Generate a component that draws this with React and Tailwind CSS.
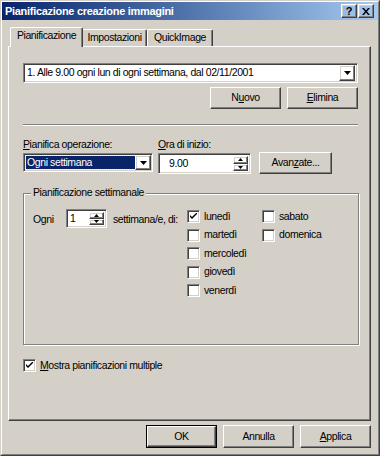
import React from "react";

const raised =
  "border border-t-white border-l-white border-r-[#404040] border-b-[#404040] shadow-[inset_-1px_-1px_0_#808080,inset_1px_1px_0_#d4d0c8]";
const sunken =
  "border border-t-[#808080] border-l-[#808080] border-r-white border-b-white shadow-[inset_1px_1px_0_#404040,inset_-1px_-1px_0_#d4d0c8]";

function Button({ className = "", children, isDefault }) {
  if (isDefault) {
    return (
      <div className={`border border-black ${className}`}>
        <div className={`${raised} w-full h-full flex items-center justify-center`}>
          {children}
        </div>
      </div>
    );
  }
  return (
    <div className={`${raised} flex items-center justify-center ${className}`}>
      {children}
    </div>
  );
}

function DownArrow() {
  return (
    <svg width="7" height="4" viewBox="0 0 7 4">
      <path d="M0 0h7L3.5 4z" fill="#000" />
    </svg>
  );
}

function SpinButtons() {
  return (
    <div className="flex flex-col w-[15px] h-full">
      <div className={`${raised} flex-1 flex items-center justify-center`}>
        <svg width="5" height="3" viewBox="0 0 5 3">
          <path d="M2.5 0L5 3H0z" fill="#000" />
        </svg>
      </div>
      <div className={`${raised} flex-1 flex items-center justify-center`}>
        <svg width="5" height="3" viewBox="0 0 5 3">
          <path d="M0 0h5L2.5 3z" fill="#000" />
        </svg>
      </div>
    </div>
  );
}

function Checkbox({ checked }) {
  return (
    <div className={`${sunken} w-[13px] h-[13px] bg-white flex items-center justify-center shrink-0`}>
      {checked && (
        <svg width="7" height="7" viewBox="0 0 7 7">
          <path d="M0 2l2 2 5-5v2L2 6 0 4z" fill="#000" />
        </svg>
      )}
    </div>
  );
}

function Day({ checked, label }) {
  return (
    <div className="flex items-center gap-[4px] h-[13px]">
      <Checkbox checked={checked} />
      <span>{label}</span>
    </div>
  );
}

export default function App() {
  return (
    <div className="w-[380px] h-[456px] bg-[#d4d0c8] text-[10.5px] tracking-[-0.4px] text-black font-['Liberation_Sans',Arial,sans-serif] border border-t-[#d4d0c8] border-l-[#d4d0c8] border-r-[#404040] border-b-[#404040]">
      <div className="w-full h-full border border-t-white border-l-white border-r-[#808080] border-b-[#808080] flex flex-col">
        {/* title bar */}
        <div className="h-[18px] bg-gradient-to-r from-[#0a246a] to-[#a6caf0] flex items-center pl-[3px] pr-[4px]">
          <span className="text-white font-bold flex-1 text-[11px] tracking-[-0.3px]">
            Pianificazione creazione immagini
          </span>
          <div className="flex gap-[1px]">
            <div className={`${raised} w-[16px] h-[14px] flex items-center justify-center font-bold text-[11px] leading-none tracking-normal`}>
              ?
            </div>
            <div className={`${raised} w-[16px] h-[14px] flex items-center justify-center`}>
              <svg width="8" height="7" viewBox="0 0 8 7">
                <path d="M0 0h2l2 2.5L6 0h2L5 3.5 8 7H6L4 4.5 2 7H0l3-3.5z" fill="#000" />
              </svg>
            </div>
          </div>
        </div>

        {/* tabs */}
        <div className="flex items-end pl-[8px] h-[20px] mt-[6px]">
          <div className="relative z-10 h-[20px] w-[73px] -mb-px bg-[#d4d0c8] border-t border-l border-t-white border-l-white border-r border-r-[#404040] shadow-[inset_-1px_0_0_#808080] rounded-t-[2px] flex items-center justify-center pb-[3px]">
            Pianificazione
          </div>
          <div className="h-[17px] w-[64px] border-t border-t-white border-r border-r-[#404040] shadow-[inset_-1px_0_0_#808080] rounded-tr-[2px] flex items-center justify-center">
            Impostazioni
          </div>
          <div className="h-[17px] w-[66px] border-t border-l border-t-white border-l-white border-r border-r-[#404040] shadow-[inset_-1px_0_0_#808080] rounded-t-[2px] flex items-center justify-center">
            QuickImage
          </div>
        </div>

        {/* panel */}
        <div className="ml-[6px] w-[363px] h-[375px] border border-t-white border-l-white border-r-[#404040] border-b-[#404040] shadow-[inset_-1px_-1px_0_#808080] pl-[14px] pt-[16px] flex flex-col">
          {/* schedules combo */}
          <div className={`${sunken} w-[335px] h-[20px] bg-white flex items-center pl-[3px] pr-[2px]`}>
            <span className="flex-1">1. Alle 9.00 ogni lun di ogni settimana, dal 02/11/2001</span>
            <div className={`${raised} w-[16px] h-[16px] flex items-center justify-center`}>
              <DownArrow />
            </div>
          </div>

          <div className="w-[335px] flex justify-end gap-[6px] mt-[4px]">
            <Button className="w-[71px] h-[22px]">
              N<u>u</u>ovo
            </Button>
            <Button className="w-[71px] h-[22px]">
              <u>E</u>limina
            </Button>
          </div>

          <div className="w-[335px] h-[2px] border-t border-t-[#808080] border-b border-b-white mt-[15px]" />

          <div className="flex mt-[12px] h-[13px] items-center">
            <span className="w-[135px]">
              <u>P</u>ianifica operazione:
            </span>
            <span>
              <u>O</u>ra di inizio:
            </span>
          </div>

          <div className="flex items-start mt-[2px]">
            <div className={`${sunken} w-[130px] h-[19px] bg-white flex items-center pl-[2px] pr-[1px]`}>
              <span className="flex-1 h-[13px] bg-[#0a246a] text-white leading-[13px] pl-[1px] outline-1 outline-dotted outline-[#ffff00]">
                Ogni settimana
              </span>
              <div className={`${raised} w-[16px] h-[15px] flex items-center justify-center`}>
                <DownArrow />
              </div>
            </div>
            <div className={`${sunken} w-[93px] h-[21px] bg-white flex items-center ml-[5px] pl-[10px] pr-[2px] py-[2px]`}>
              <span className="flex-1">9.00</span>
              <SpinButtons />
            </div>
            <Button className="w-[73px] h-[22px] ml-[8px] -mt-px">
              Avan<u>z</u>ate...
            </Button>
          </div>

          {/* group box */}
          <div className="relative w-[336px] h-[152px] mt-[19px] border border-[#808080] shadow-[1px_1px_0_white,inset_1px_1px_0_white]">
            <span className="absolute -top-[8px] left-[7px] bg-[#d4d0c8] px-[2px] leading-[13px]">
              Pianificazione settimanale
            </span>
            <div className="flex pl-[9px] pt-[15px]">
              <span className="mt-[3px] w-[33px]">Ogni</span>
              <div className={`${sunken} w-[41px] h-[19px] bg-white flex items-center pl-[3px] pr-[2px] py-[2px]`}>
                <span className="flex-1">1</span>
                <SpinButtons />
              </div>
              <span className="ml-[6px] mt-[3px] w-[74px]">settimana/e, di:</span>
              <div className="flex flex-col gap-[5.5px] mt-[1px] w-[75px]">
                <Day checked label="lunedì" />
                <Day label="martedì" />
                <Day label="mercoledì" />
                <Day label="giovedì" />
                <Day label="venerdì" />
              </div>
              <div className="flex flex-col gap-[5.5px] mt-[1px]">
                <Day label="sabato" />
                <Day label="domenica" />
              </div>
            </div>
          </div>

          <div className="flex items-center gap-[4px] mt-[14px] h-[13px]">
            <Checkbox checked />
            <span>
              <u>M</u>ostra pianificazioni multiple
            </span>
          </div>
        </div>

        {/* bottom buttons */}
        <div className="flex justify-end gap-[6px] pr-[7px] mt-[4px]">
          <Button isDefault className="w-[71px] h-[23px]">
            OK
          </Button>
          <Button className="w-[71px] h-[23px]">Annulla</Button>
          <Button className="w-[71px] h-[23px]">
            <u>A</u>pplica
          </Button>
        </div>
      </div>
    </div>
  );
}
